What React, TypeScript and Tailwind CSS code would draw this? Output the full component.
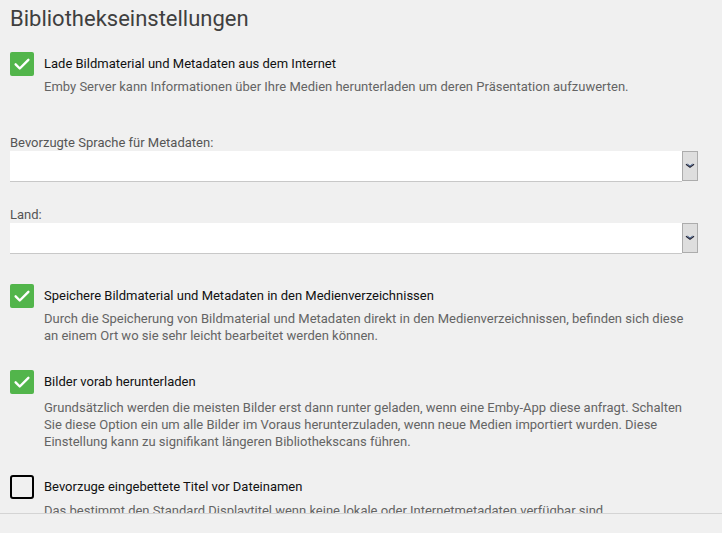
import React from 'react';

function Check({ checked }: { checked: boolean }) {
  if (!checked) {
    return <div className="w-6 h-6 shrink-0 rounded-[3px] border-2 border-black" />;
  }
  return (
    <div className="w-6 h-6 shrink-0 rounded-[2px] bg-[#52b54b] flex items-center justify-center">
      <svg width="18" height="18" viewBox="0 0 24 24">
        <path d="M3.5 12.5l5.5 5.5L20.5 6.5" fill="none" stroke="#fff" strokeWidth="3.2" strokeLinecap="round" strokeLinejoin="round" />
      </svg>
    </div>
  );
}

function CheckRow({
  checked,
  label,
  desc,
  className,
  descClass = 'mt-[1.5px]',
}: {
  checked: boolean;
  label: string;
  desc: string;
  className: string;
  descClass?: string;
}) {
  return (
    <div className={`flex gap-[10px] ${className}`}>
      <Check checked={checked} />
      <div className="flex-1">
        <div className="h-6 flex items-center text-[13px] text-[#111]">{label}</div>
        <p className={`${descClass} text-[13px] leading-[17px] text-[#646464]`}>{desc}</p>
      </div>
    </div>
  );
}

function SelectField({ label, className }: { label: string; className: string }) {
  return (
    <div className={className}>
      <div className="text-[13px] leading-[17px] text-[#555]">{label}</div>
      <div className="flex h-[31px]">
        <div className="flex-1 bg-white border-b border-[#c8c8c8]" />
        <div className="w-4 h-[30px] bg-[#dedede] border border-[#acacac] flex items-center justify-center">
          <svg width="10" height="6" viewBox="0 0 10 6">
            <path d="M1 1.2l4 3 4-3" fill="none" stroke="#223" strokeWidth="1.3" />
            <path d="M2.5 1l2.5 2 2.5-2" fill="none" stroke="#2a4f8a" strokeWidth="0.8" />
          </svg>
        </div>
      </div>
    </div>
  );
}

export default function App() {
  return (
    <div className="h-screen flex flex-col bg-[#f0f0f0] font-['Roboto',sans-serif]">
      <div className="flex-1 overflow-hidden pl-[10px] pr-6">
        <h1 className="mt-[5px] text-[22px] leading-7 text-[#3f3f3f]">Bibliothekseinstellungen</h1>

        <CheckRow
          className="mt-[19px]"
          checked
          label="Lade Bildmaterial und Metadaten aus dem Internet"
          desc="Emby Server kann Informationen über Ihre Medien herunterladen um deren Präsentation aufzuwerten."
        />

        <SelectField className="mt-[39px]" label="Bevorzugte Sprache für Metadaten:" />
        <SelectField className="mt-[24px]" label="Land:" />

        <CheckRow
          className="mt-[30px]"
          checked
          label="Speichere Bildmaterial und Metadaten in den Medienverzeichnissen"
          desc="Durch die Speicherung von Bildmaterial und Metadaten direkt in den Medienverzeichnissen, befinden sich diese an einem Ort wo sie sehr leicht bearbeitet werden können."
          descClass="mt-[2.5px]"
        />

        <CheckRow
          className="mt-[26px]"
          checked
          label="Bilder vorab herunterladen"
          desc="Grundsätzlich werden die meisten Bilder erst dann runter geladen, wenn eine Emby-App diese anfragt. Schalten Sie diese Option ein um alle Bilder im Voraus herunterzuladen, wenn neue Medien importiert wurden. Diese Einstellung kann zu signifikant längeren Bibliothekscans führen."
          descClass="mt-[5px]"
        />

        <CheckRow
          className="mt-[25px]"
          checked={false}
          label="Bevorzuge eingebettete Titel vor Dateinamen"
          desc="Das bestimmt den Standard Displaytitel wenn keine lokale oder Internetmetadaten verfügbar sind."
          descClass="mt-[2.5px]"
        />
      </div>
      <div className="h-5 shrink-0 border-t border-[#d4d4d4]" />
    </div>
  );
}
